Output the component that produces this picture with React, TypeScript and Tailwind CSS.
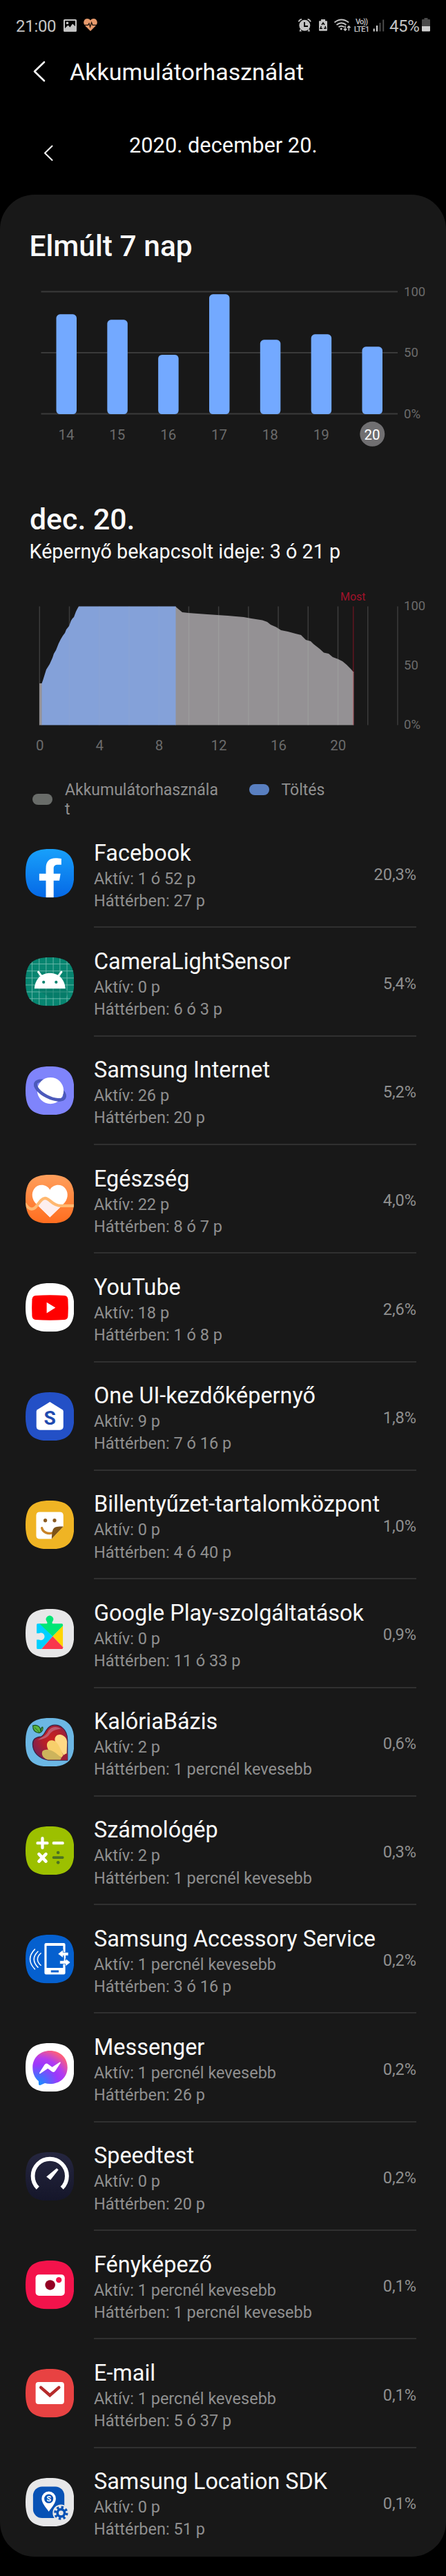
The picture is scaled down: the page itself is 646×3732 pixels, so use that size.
import type { ReactNode } from "react";

const SQUIRCLE =
  "M35 0C60.5 0 70 9.5 70 35C70 60.5 60.5 70 35 70C9.5 70 0 60.5 0 35C0 9.5 9.5 0 35 0Z";

function AppIcon({ id, fill, children }: { id: string; fill: string; children: ReactNode }) {
  return (
    <svg viewBox="0 0 70 70" className="h-[70.5px] w-[70.5px] shrink-0">
      <defs>
        <clipPath id={`clip-${id}`}>
          <path d={SQUIRCLE} />
        </clipPath>
        <linearGradient id="fb" x1="0" y1="0" x2="0" y2="1">
          <stop offset="0" stopColor="#18a0fb" />
          <stop offset="1" stopColor="#0568e6" />
        </linearGradient>
        <linearGradient id="health" x1="0" y1="0" x2="0" y2="1">
          <stop offset="0" stopColor="#ff9f5c" />
          <stop offset="1" stopColor="#ff6d1f" />
        </linearGradient>
        <linearGradient id="speed" x1="0" y1="0" x2="0" y2="1">
          <stop offset="0" stopColor="#25263f" />
          <stop offset="1" stopColor="#15162a" />
        </linearGradient>
        <radialGradient id="msg" cx="0.15" cy="1" r="1.1">
          <stop offset="0" stopColor="#0a95ff" />
          <stop offset="0.55" stopColor="#9c38fb" />
          <stop offset="0.72" stopColor="#b23cf0" />
          <stop offset="1" stopColor="#ff5f78" />
        </radialGradient>
        <radialGradient id="apple" cx="0.55" cy="0.4" r="0.6">
          <stop offset="0" stopColor="#c8201f" />
          <stop offset="0.45" stopColor="#b31f2b" />
          <stop offset="1" stopColor="#7d2050" />
        </radialGradient>
      </defs>
      <g clipPath={`url(#clip-${id})`}>
        <rect width="70" height="70" fill={fill} />
        {children}
      </g>
    </svg>
  );
}

const FacebookIcon = (
  <AppIcon id="facebook" fill="url(#fb)">
    <path
      fill="#fff"
      d="M29.3 70V45.5H19.7V35.5H29.3V28C29.3 18 34 13.2 43 13.2C46 13.2 49.5 13.5 51.5 14V22.7H47C42 22.7 40.4 24.5 40.4 28.5V35.5H50.3L48.7 45.5H40.4V70Z"
    />
  </AppIcon>
);

const AndroidIcon = (
  <AppIcon id="android" fill="#078570">
    <path
      stroke="#6fb9ac"
      strokeWidth="0.9"
      d="M9.4 0V70M19.6 0V70M29.6 0V70M39.8 0V70M49.5 0V70M59.6 0V70M0 9.5H70M0 19.6H70M0 29.7H70M0 39.7H70M0 49.6H70M0 59.4H70"
    />
    <path fill="#067361" d="M13 45H57L62 50L58 58H36Z" opacity="0.5" />
    <path fill="#fff" d="M12.7 45C13.6 32 22 22.6 35 22.6S56.4 32 57.3 45Z" />
    <path stroke="#fff" strokeWidth="3" strokeLinecap="round" d="M18.4 21L24 28.5M51.6 21L46 28.5" />
    <circle cx="26" cy="35.7" r="2.1" fill="#078570" />
    <circle cx="44" cy="35.7" r="2.1" fill="#078570" />
  </AppIcon>
);

const InternetIcon = (
  <AppIcon id="internet" fill="#7f84fb">
    <ellipse cx="35.3" cy="34.3" rx="23" ry="10" fill="none" stroke="#4c5abb" strokeWidth="4.6" transform="rotate(27 35.3 34.3)" />
    <circle cx="35.8" cy="34.8" r="19" fill="#fff" />
    <path
      d="M12.3 34.3A23 10 0 0 0 58.3 34.3"
      fill="none"
      stroke="#4c5abb"
      strokeWidth="4.6"
      transform="rotate(27 35.3 34.3)"
    />
  </AppIcon>
);

const HealthIcon = (
  <AppIcon id="health" fill="url(#health)">
    <path
      fill="#fff"
      d="M35 21.5C30 13 18 12.6 12.5 20C7.5 27 9.5 36 15.5 42L35 61L54.5 42C60.5 36 62.5 27 57.5 20C52 12.6 40 13 35 21.5Z"
    />
    <path fill="#fdeeee" d="M16 42.5C21 36 24 33 28 33.3C35 34 37 44 50 44.8L52 44.8L35 61Z" />
    <path
      d="M-1 41C4 49 9 51.500 14 47C19 42 22 34 28 33.6C35 33.6 38 44.6 51 44.6H71"
      fill="none"
      stroke="#ffb870"
      strokeWidth="4.200"
    />
  </AppIcon>
);

const YouTubeIcon = (
  <AppIcon id="youtube" fill="#fff">
    <path
      fill="#f00"
      d="M14.500 17.800Q35 16.500 56 17.800Q60.600 18.300 61 23Q61.800 35.200 61 47.500Q60.600 52.300 56 52.700Q35 54 14.500 52.700Q9.900 52.300 9.400 47.500Q8.700 35.200 9.400 23Q9.900 18.300 14.500 17.800Z"
    />
    <path fill="#fff" d="M30.400 27.600L43 35.300L30.400 43.200Z" />
  </AppIcon>
);

const OneUiIcon = (
  <AppIcon id="oneui" fill="#2350c6">
    <path
      fill="#fff"
      d="M35 14L53 25Q54.400 26 54.400 27.500V49Q54.400 54.300 49.200 54.300H20.800Q15.600 54.300 15.600 49V27.500Q15.600 26 17 25Z"
    />
    <text x="35" y="46.800" textAnchor="middle" fontFamily="Roboto, sans-serif" fontWeight="700" fontSize="28" fill="#1f4bb0">
      S
    </text>
  </AppIcon>
);

const KeyboardIcon = (
  <AppIcon id="keyboard" fill="#efb424">
    <path fill="#fff" d="M20.500 16.300H49.200Q54.400 16.300 54.400 21.500V37.300L37.500 55H20.500Q15.300 55 15.300 49.800V21.500Q15.300 16.300 20.500 16.300Z" />
    <path d="M23.500 39.500C25 45.500 32 48.500 38.500 46.500" fill="none" stroke="#c98427" strokeWidth="3.400" strokeLinecap="round" />
    <path fill="#7d5317" d="M54.400 37.300L37.500 55C38 50 37.800 45 39.500 41.500C41.500 37.500 47 37.300 54.400 37.300Z" />
    <ellipse cx="28.400" cy="28.600" rx="2.600" ry="2.700" fill="#8a5a20" />
    <ellipse cx="41.700" cy="28.600" rx="2.600" ry="2.700" fill="#8a5a20" />
  </AppIcon>
);

const PlayServicesIcon = (
  <AppIcon id="play" fill="#e7e7e8">
    <path fill="#00d0ff" d="M17.500 21H21L39 39.500L23 57.700H17.500Q16 57.700 16 56.200V44.300H19.500A5.300 5.300 0 1 0 19.500 35H16V22.500Q16 21 17.500 21Z" />
    <path fill="#00e676" d="M20 21H30.800Q32 20 30.600 18A5.200 5.200 0 1 1 38.800 18Q37.500 20 38.700 21H52.200Q53.700 21 53.700 22.500V24.500L39 39.500Z" />
    <path fill="#ffd500" d="M53.700 24.300V55L39 39.500Z" />
    <path fill="#f9364c" d="M23 57.700L39 39.500L53.700 54.800V56.200Q53.700 57.700 52.200 57.700Z" />
  </AppIcon>
);

const KaloriaIcon = (
  <AppIcon id="kaloria" fill="#6cb7e4">
    <path
      d="M22 27C27 25 27.500 20 31 16C36 9 46 8 53 14C58 18 60.300 24 60.300 32V60.600H32C20 58 10 50 10.300 37C10.500 30 15 27.500 22 27Z"
      fill="url(#apple)"
      stroke="#3a2345"
      strokeWidth="1.200"
    />
    <path d="M33 18C37 12 46 11 51 16C45 16 38 18 34 24C31 29 24 30 17 32C23 27 30 26 33 18Z" fill="#c98aa6" opacity="0.550" />
    <path d="M59 60L43.500 36C39.500 28 45 22.500 51 24C56 25 60 30 59.700 35Z" fill="#ffd986" />
    <path d="M57 60L33 46C28 38 32 31.500 38 32C45 32.500 48 40 51 46Z" fill="#f7cf6b" />
    <path d="M56 60H32C25 58 22 52 24.500 47.500C30 43 40 46 50 56Z" fill="#cdb45c" />
    <path d="M60.300 51Q53 52 50 60.600H60.300Z" fill="#9c2038" />
    <path d="M10.500 11C17 9 22 13 21.500 19C23 16 22 13 24.500 13C26 16 24 20 19.500 21.500C13 21 10.500 17 10.500 11Z" fill="#5cb83c" stroke="#1f5a28" strokeWidth="1.300" />
    <path d="M13 13.500L20 20.500" stroke="#1f5a28" strokeWidth="0.900" />
  </AppIcon>
);

const CalculatorIcon = (
  <AppIcon id="calc" fill="#9cc000">
    <path stroke="#fff" strokeWidth="4.300" strokeLinecap="round" d="M17.400 24H31.200M24.300 17.100V30.900M40.500 24H53.300" />
    <path stroke="#fff" strokeWidth="4.600" strokeLinecap="round" d="M19.300 39.800L29.300 50.200M29.300 39.800L19.300 50.200" />
    <path stroke="#4c7222" strokeWidth="3.800" strokeLinecap="round" d="M40.300 44.800H53.300" />
    <circle cx="46.800" cy="37.700" r="2.300" fill="#4c7222" />
    <circle cx="46.800" cy="52" r="2.300" fill="#4c7222" />
  </AppIcon>
);

const AccessoryIcon = (
  <AppIcon id="accessory" fill="#0560cf">
    <path fill="none" stroke="#fff" strokeWidth="1.500" strokeLinecap="round" d="M13.300 21Q-.3 35 13.300 49.500M17.800 24Q6.500 35 17.800 46.800M22 26.500Q12.500 35 22 44" />
    <path
      fill="#fff"
      fillRule="evenodd"
      d="M29.500 12H55Q57.200 12 57.200 14.200V54.800Q57.200 57 55 57H29.500Q27.200 57 27.200 54.800V14.200Q27.200 12 29.500 12ZM30.300 16V47.700H54V16ZM36.500 51.200V54H47.700V51.200Z"
    />
    <path fill="#0560cf" d="M50 31.500H58.500V36.500H50Z" />
    <path
      fill="#fff"
      stroke="#0560cf"
      strokeWidth="0.700"
      d="M46.500 27.500L54 21.500V25.200H61.600V30H58V36.800H57.500V34L64.600 39.800L57.500 45.500V42H49.300V37.300H55V30H54V33.300Z"
    />
  </AppIcon>
);

const MessengerIcon = (
  <AppIcon id="messenger" fill="#fff">
    <path
      fill="url(#msg)"
      d="M35.200 11C49.500 11 60.300 21 60.300 35S49.500 58.700 35.200 58.700C32.500 58.700 30 58.300 27.800 57.600L21 60.500Q19 61 18.900 59.200L18.700 54.700C13.200 50 10.200 43.200 10.200 35C10.200 21 20.900 11 35.200 11Z"
    />
    <path fill="#fff" d="M19.900 42.700L27.300 31Q29.500 28 32.500 30.200L38.300 34.500L49.300 27.400Q50.800 27 50.300 28.500L43 39.800Q40.800 43 37.700 40.700L32 36.600L21 43.900Q19.300 44.300 19.900 42.700Z" />
  </AppIcon>
);

const SpeedtestIcon = (
  <AppIcon id="speedtest" fill="url(#speed)">
    <path d="M17.700 51.500A24.500 24.500 0 1 1 52.300 51.500" fill="none" stroke="#fff" strokeWidth="5.800" />
    <path fill="#fff" d="M44.800 23.200L47.300 25.400L35.800 40L30 35.300Z" />
  </AppIcon>
);

const CameraIcon = (
  <AppIcon id="camera" fill="#f3134b">
    <rect x="14.400" y="20" width="42" height="30.700" rx="5" fill="#fff" />
    <circle cx="35.400" cy="35.200" r="7.200" fill="#930024" />
    <circle cx="47.900" cy="28" r="4.100" fill="#f3134b" />
  </AppIcon>
);

const EmailIcon = (
  <AppIcon id="email" fill="#e84242">
    <rect x="14.500" y="18.800" width="41" height="31.800" rx="4" fill="#fff" />
    <path d="M22 26.700L35 38L48 26.700" fill="none" stroke="#b52b2b" strokeWidth="4.400" strokeLinecap="round" />
  </AppIcon>
);

const LocationIcon = (
  <AppIcon id="location" fill="#e7e7e8">
    <rect x="10.800" y="12.300" width="45" height="45.400" rx="13" fill="#0852b5" />
    <path fill="#fff" d="M33.400 48.300C29 42 23.200 36 23.200 29.500A10.200 10.200 0 0 1 43.600 29.500C43.600 36 37.800 42 33.400 48.300Z" />
    <circle cx="33.400" cy="29.800" r="6.500" fill="#0852b5" />
    <text x="33.400" y="33.600" textAnchor="middle" fontFamily="Roboto, sans-serif" fontWeight="700" fontSize="10.500" fill="#fff">
      S
    </text>
    <circle cx="51" cy="50.300" r="12" fill="#e7e7e8" />
    <circle cx="51" cy="50.300" r="8.300" fill="none" stroke="#0852b5" strokeWidth="3.600" strokeDasharray="3.260 3.260" />
    <circle cx="51" cy="50.300" r="5.200" fill="none" stroke="#0852b5" strokeWidth="3.600" />
  </AppIcon>
);

interface AppUsage {
  name: string;
  active: string;
  background: string;
  percent: string;
  icon: ReactNode;
}

const LESS = "1 percnél kevesebb";

const apps: AppUsage[] = [
  { name: "Facebook", active: "1 ó 52 p", background: "27 p", percent: "20,3%", icon: FacebookIcon },
  { name: "CameraLightSensor", active: "0 p", background: "6 ó 3 p", percent: "5,4%", icon: AndroidIcon },
  { name: "Samsung Internet", active: "26 p", background: "20 p", percent: "5,2%", icon: InternetIcon },
  { name: "Egészség", active: "22 p", background: "8 ó 7 p", percent: "4,0%", icon: HealthIcon },
  { name: "YouTube", active: "18 p", background: "1 ó 8 p", percent: "2,6%", icon: YouTubeIcon },
  { name: "One UI-kezdőképernyő", active: "9 p", background: "7 ó 16 p", percent: "1,8%", icon: OneUiIcon },
  { name: "Billentyűzet-tartalomközpont", active: "0 p", background: "4 ó 40 p", percent: "1,0%", icon: KeyboardIcon },
  { name: "Google Play-szolgáltatások", active: "0 p", background: "11 ó 33 p", percent: "0,9%", icon: PlayServicesIcon },
  { name: "KalóriaBázis", active: "2 p", background: LESS, percent: "0,6%", icon: KaloriaIcon },
  { name: "Számológép", active: "2 p", background: LESS, percent: "0,3%", icon: CalculatorIcon },
  { name: "Samsung Accessory Service", active: LESS, background: "3 ó 16 p", percent: "0,2%", icon: AccessoryIcon },
  { name: "Messenger", active: LESS, background: "26 p", percent: "0,2%", icon: MessengerIcon },
  { name: "Speedtest", active: "0 p", background: "20 p", percent: "0,2%", icon: SpeedtestIcon },
  { name: "Fényképező", active: LESS, background: LESS, percent: "0,1%", icon: CameraIcon },
  { name: "E-mail", active: LESS, background: "5 ó 37 p", percent: "0,1%", icon: EmailIcon },
  { name: "Samsung Location SDK", active: "0 p", background: "51 p", percent: "0,1%", icon: LocationIcon },
];

function StatusBar() {
  return (
    <div className="flex h-[74px] items-start pt-[23px] pl-[23px] text-[24px] leading-[30px] text-[#c4c4c4]">
      <span className="w-[69px] tracking-[-0.3px]">21:00</span>
      <svg width="19" height="18" viewBox="0 0 19 18" className="mt-[5px]">
        <path
          fill="#c4c4c4"
          fillRule="evenodd"
          d="M1.500 0H17.500Q19 0 19 1.500V16.500Q19 18 17.500 18H1.500Q0 18 0 16.500V1.500Q0 0 1.500 0ZM2 2V13L6.500 8.500L9.500 11.500L13 6.500L17 10V2ZM5.500 3.500A1.800 1.800 0 1 0 5.510 3.500Z"
        />
      </svg>
      <svg width="20" height="18" viewBox="0 0 20 18" className="mt-[4px] ml-[10px]">
        <path fill="#e89a6c" d="M10 2.500C7.500-.8 3-.6 1.200 2.200C-.6 5 .1 8 2.500 10.500L10 18L17.500 10.500C19.900 8 20.600 5 18.800 2.200C17-.6 12.500-.8 10 2.500Z" />
        <path fill="none" stroke="#1b120c" strokeWidth="1.200" d="M1 9.300H6.500L8 7L9.600 12L11.600 5.500L13 9.300H19" />
      </svg>
      <div className="flex-1" />
      <svg width="134" height="24" viewBox="431 25 134 24" className="mt-[2px] shrink-0">
        <g fill="#c4c4c4">
          <circle cx="441.300" cy="36.800" r="8" />
          <path d="M435 41.500L433.500 45.500H437ZM447.600 41.500L449 45.500H445.500Z" />
          <path d="M432.600 31.500Q433.500 28.500 437 27.800M450 31.500Q449 28.500 445.600 27.800" stroke="#c4c4c4" strokeWidth="1.700" fill="none" />
          <path d="M441 32V38H446" stroke="#000" strokeWidth="1.800" fill="none" />
          <path d="M465 28H471V30.300H473.200Q474 30.300 474 31.300V43.700Q474 44.700 473 44.700H463Q462 44.700 462 43.700V31.300Q462 30.300 462.800 30.300H465Z" />
          <path d="M466 36L468 33L470 36M471 38L472 41H469M467 41.300H464L465.300 38" stroke="#000" strokeWidth="1.500" fill="none" />
        </g>
        <g fill="none" stroke="#c4c4c4" strokeWidth="1.900">
          <path d="M484.500 32.500Q494.500 24.500 505 32.500" />
          <path d="M487.500 36Q494.500 30.500 501.500 36" />
          <path d="M490.500 39.300Q494.500 36.300 498.500 39.300" />
        </g>
        <circle cx="494.200" cy="41.800" r="1.600" fill="#c4c4c4" />
        <path fill="none" stroke="#c4c4c4" strokeWidth="1.500" d="M500 37.500V44M497.800 41.800L500 44.200L502.200 41.800M505.300 44.500V38M503.100 40.300L505.300 37.900L507.500 40.300" />
        <text x="515" y="34.800" fontSize="11" fontWeight="500" fill="#c4c4c4" textLength="18" fontFamily="Roboto, sans-serif">
          Vo))
        </text>
        <text x="512.800" y="45.500" fontSize="11.500" fontWeight="500" fill="#c4c4c4" textLength="22.500" fontFamily="Roboto, sans-serif">
          LTE1
        </text>
        <path stroke="#d8d8d8" strokeWidth="2" d="M541.700 41.500V45.500M546 37V45.500" />
        <path stroke="#4b4b4b" strokeWidth="2" d="M550.500 33V45.500M555.200 28.500V45.500" />
      </svg>
      <span className="-ml-[1px] w-[47px] tracking-[-0.4px]">45%</span>
      <svg width="12" height="20" viewBox="0 0 12 20" className="mt-[3px] mr-[23px]">
        <path fill="#4a4a4a" d="M3.500 0H8.500V2H11Q12 2 12 3V12H0V3Q0 2 1 2H3.500Z" />
        <path fill="#cfcfcf" d="M0 12H12V18.500Q12 19.500 11 19.500H1Q0 19.500 0 18.500Z" />
      </svg>
    </div>
  );
}

const days = [
  { day: 14, top: 455.3 },
  { day: 15, top: 463.3 },
  { day: 16, top: 514 },
  { day: 17, top: 426.3 },
  { day: 18, top: 492.3 },
  { day: 19, top: 484.3 },
  { day: 20, top: 502.3 },
];

function WeekChart() {
  return (
    <svg width="646" height="250" viewBox="0 410 646 250" className="block" fontFamily="Roboto, sans-serif">
      <path stroke="#3a3a3a" strokeWidth="2" d="M59.500 422.500H576M59.500 511H576M59.500 599.500H576" />
      {days.map((d, i) => (
        <g key={d.day}>
          <rect x={81.5 + i * 73.83} y={d.top} width="29.500" height={600 - d.top} rx="5.500" fill="#73a9ff" />
          {d.day === 20 && <circle cx="539.300" cy="628.800" r="18" fill="#706f71" />}
          <text x={96 + i * 73.83} y="636.700" fontSize="20.500" textAnchor="middle" fill={d.day === 20 ? "#fff" : "#6b6b6b"}>
            {d.day}
          </text>
        </g>
      ))}
      <g fontSize="18.500" fill="#6b6b6b">
        <text x="585" y="428.700">100</text>
        <text x="585" y="517.300">50</text>
        <text x="585" y="606">0%</text>
      </g>
    </svg>
  );
}

function DayChart() {
  const grid = Array.from({ length: 13 }, (_, i) => 57.3 + i * 43.22);
  return (
    <svg width="646" height="250" viewBox="0 850 646 250" className="block" fontFamily="Roboto, sans-serif">
      {grid.map((x) => (
        <path key={x} d={`M${x} 878.500V1050.500`} stroke="#3c3c3c" strokeWidth="1.500" />
      ))}
      <path
        fill="#949194"
        d="M57 990H61V1050.500H57ZM254 878.500L258 882L264 887L273 888L300 890L330 892L353 894L364 896L380 898.500L387 901L392 905L400 908.500L407 913L417 915L428 918L436 920L443 927L450 929L454 933L463 940L469 945.500L476 947L482 952L490 955L496 958L502 963L507 968L511.500 973V1050.500H254Z"
      />
      <path
        fill="#84a1d9"
        d="M60.500 990L62 986L67 970L72 962L76 953L78 947L81 942L85 932L88 926L91 921L94 917L96 912L100 907L103 899L105 896L107 894L110 886L112 882L114 878.500H254.500V1050.500H60.500Z"
      />
      <path stroke="#88a3d5" strokeWidth="1.500" d="M100.500 908V1050M143.700 879V1050M187 879V1050M230.200 879V1050" />
      <path stroke="#9b9c9b" strokeWidth="1.500" d="M273.500 889V1050M316.700 892V1050M359.900 896V1050M403.100 912V1050M446.300 929V1050M489.600 956V1050" />
      <path stroke="#611520" strokeWidth="1.500" d="M511.700 878.500V973" />
      <path stroke="#a86a70" strokeWidth="1.500" d="M511.700 973V1050.500" />
      <text x="511.300" y="869.700" fontSize="16" textAnchor="middle" fill="#a0122a">
        Most
      </text>
      <g fontSize="18.500" fill="#6b6b6b">
        <text x="585" y="884.300">100</text>
        <text x="585" y="969.700">50</text>
        <text x="585" y="1055.700">0%</text>
      </g>
      <g fontSize="20.500" fill="#6b6b6b" textAnchor="middle">
        {[0, 4, 8, 12, 16, 20].map((h, i) => (
          <text key={h} x={57.8 + i * 86.4} y="1086.700">
            {h}
          </text>
        ))}
      </g>
    </svg>
  );
}

function UsageRow({ app, last }: { app: AppUsage; last: boolean }) {
  return (
    <li className="flex h-[157.32px] items-start pl-[36.5px]">
      <div className="pt-[43px]">{app.icon}</div>
      <div
        className={`ml-[29px] flex h-full w-[467px] items-start border-b-2 ${last ? "border-transparent" : "border-[#303030]"}`}
      >
        <div className="w-[417px] pt-[28.6px] whitespace-nowrap">
          <div className="text-[32.4px] leading-[40px] text-[#fafafa]">{app.name}</div>
          <div className="mt-[1px] text-[23.5px] leading-[32.2px] text-[#8f8f8f]">
            <div>Aktív: {app.active}</div>
            <div>Háttérben: {app.background}</div>
          </div>
        </div>
        <div className="flex w-[50px] justify-end pt-[64.3px] text-[23.5px] leading-[32px] whitespace-nowrap text-[#8f8f8f]">
          {app.percent}
        </div>
      </div>
    </li>
  );
}

export default function App() {
  return (
    <div className="h-[3732px] w-[646px] overflow-hidden bg-black font-[Roboto,sans-serif]">
      <StatusBar />
      <header className="flex h-[60px] items-center pl-[47px]">
        <svg width="20" height="32" viewBox="0 0 20 32" fill="none" stroke="#fafafa" strokeWidth="2.600">
          <path d="M17 2L3 15.500L17 29" strokeLinecap="round" strokeLinejoin="round" />
        </svg>
        <h1 className="ml-[34px] text-[34px] leading-[40px] text-[#fafafa]">Akkumulátorhasználat</h1>
      </header>
      <div className="flex h-[148px] items-start pl-[62px]">
        <svg width="16" height="24" viewBox="0 0 16 24" fill="none" stroke="#fafafa" strokeWidth="2" className="mt-[76px]">
          <path d="M13.500 1.500L3 11.700L13.500 22" strokeLinecap="round" strokeLinejoin="round" />
        </svg>
        <div className="mt-[57px] ml-[109px] text-[30.8px] leading-[40px] text-[#fafafa]">2020. december 20.</div>
      </div>

      <main className="h-[3421.5px] rounded-[50px] bg-[#181818]">
        <h2 className="h-[128px] pt-[50px] pl-[42.5px] text-[42.5px] leading-[50px] font-medium text-[#fafafa]">
          Elmúlt 7 nap
        </h2>
        <WeekChart />
        <h2 className="h-[122px] pt-[67px] pl-[43px] text-[42.8px] leading-[50px] font-medium text-[#fafafa]">
          dec. 20.
        </h2>
        <p className="h-[68px] pl-[42.5px] text-[28.7px] leading-[34px] text-[#fafafa]">
          Képernyő bekapcsolt ideje: 3 ó 21 p
        </p>
        <DayChart />
        <div className="flex h-[87px] items-start pt-[31px] pl-[46.5px] text-[23px] leading-[28px] text-[#8f8f8f]">
          <div className="mt-[19px] h-[15.5px] w-[29px] rounded-full bg-[#696c69]" />
          <div className="ml-[18.5px] w-[226px] break-all">Akkumulátorhasználat</div>
          <div className="mt-[5px] ml-[40.5px] h-[15.5px] w-[29.5px] rounded-full bg-[#597fc0]" />
          <div className="ml-[17.5px]">Töltés</div>
        </div>
        <ul>
          {apps.map((app, i) => (
            <UsageRow key={app.name} app={app} last={i === apps.length - 1} />
          ))}
        </ul>
      </main>
    </div>
  );
}
